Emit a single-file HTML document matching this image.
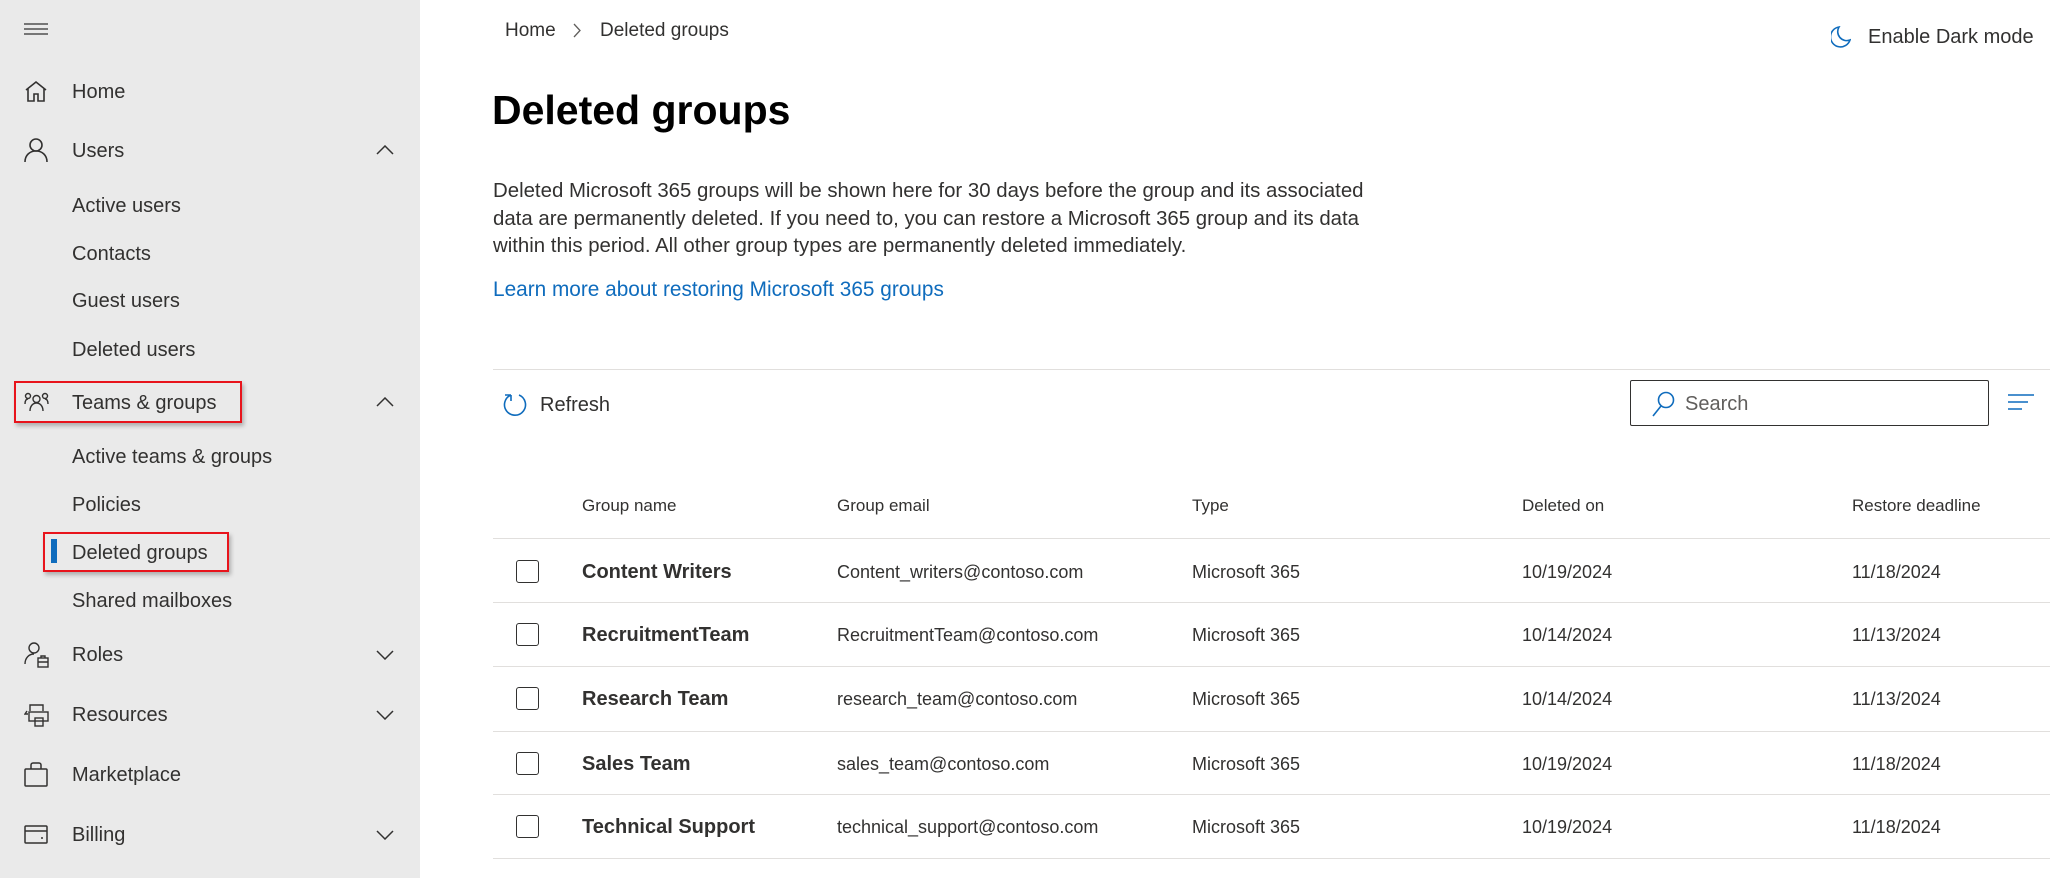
<!DOCTYPE html>
<html><head><meta charset="utf-8"><style>
*{margin:0;padding:0;box-sizing:border-box}
body{width:2061px;height:878px;overflow:hidden;background:#fff;font-family:"Liberation Sans",sans-serif;color:#323130;position:relative}
.side{position:absolute;left:0;top:0;width:420px;height:878px;background:#eaeaea}
.t{position:absolute;white-space:nowrap;line-height:1}
.side .t{font-size:20px;color:#323130}
.ic{position:absolute}
.box{position:absolute;border:2px solid #e8141c;box-shadow:2px 3px 4px rgba(0,0,0,.25)}
.main .t{color:#323130}
.hd{font-size:17px;color:#484644}
.cell{font-size:18px;color:#323130}
.nm{font-size:20px;font-weight:bold;color:#323130}
.ln{position:absolute;left:493px;width:1557px;height:1px;background:#e1dfdd}
.cb{position:absolute;left:516px;width:23px;height:23px;border:1.5px solid #323130;border-radius:3px;background:#fff}
</style></head><body>
<div class="side">
<svg class="ic" style="left:24px;top:23px" width="24" height="12"><path d="M0 1h24M0 6h24M0 11h24" stroke="#323130" stroke-width="1.3"/></svg>
<svg class="ic" style="left:24px;top:80px" width="24" height="22" fill="none" stroke="#323130" stroke-width="1.6"><path d="M2 10L12 2l10 8M4 8v13h6v-7h4v7h6V8"/></svg>
<div class="t" style="left:72px;top:82px">Home</div>
<svg class="ic" style="left:24px;top:138px" width="24" height="25" fill="none" stroke="#323130" stroke-width="1.6"><circle cx="12" cy="7" r="6"/><path d="M1 24c0-7 5-11 11-11s11 4 11 11"/></svg>
<div class="t" style="left:72px;top:141px">Users</div>
<svg class="ic" style="left:376px;top:145px" width="18" height="10" fill="none" stroke="#323130" stroke-width="1.5"><path d="M1 9l8-8 8 8"/></svg>
<div class="t" style="left:72px;top:196px">Active users</div>
<div class="t" style="left:72px;top:244px">Contacts</div>
<div class="t" style="left:72px;top:291px">Guest users</div>
<div class="t" style="left:72px;top:340px">Deleted users</div>
<div class="box" style="left:14px;top:381px;width:228px;height:42px"></div>
<svg class="ic" style="left:24px;top:392px" width="25" height="20" fill="none" stroke="#323130" stroke-width="1.4"><circle cx="4" cy="4" r="2.5"/><circle cx="21" cy="4" r="2.5"/><circle cx="12.5" cy="7" r="3.5"/><path d="M1 12c0-3 1-5 3-5M24 12c0-3-1-5-3-5M6 19c0-5 3-8 6.5-8s6.5 3 6.5 8"/></svg>
<div class="t" style="left:72px;top:393px">Teams &amp; groups</div>
<svg class="ic" style="left:376px;top:397px" width="18" height="10" fill="none" stroke="#323130" stroke-width="1.5"><path d="M1 9l8-8 8 8"/></svg>
<div class="t" style="left:72px;top:447px">Active teams &amp; groups</div>
<div class="t" style="left:72px;top:495px">Policies</div>
<div class="box" style="left:43px;top:532px;width:186px;height:40px"></div>
<div style="position:absolute;left:51px;top:539px;width:6px;height:24px;background:#0f6cbd"></div>
<div class="t" style="left:72px;top:543px">Deleted groups</div>
<div class="t" style="left:72px;top:591px">Shared mailboxes</div>
<svg class="ic" style="left:24px;top:642px" width="25" height="26" fill="none" stroke="#323130" stroke-width="1.4"><circle cx="10" cy="6" r="5"/><path d="M1 22c0-6 4-10 9-10"/><rect x="14" y="16" width="10" height="9"/><path d="M17 16v-2h4v2M14 20h10"/></svg>
<div class="t" style="left:72px;top:645px">Roles</div>
<svg class="ic" style="left:376px;top:650px" width="18" height="10" fill="none" stroke="#323130" stroke-width="1.5"><path d="M1 1l8 8 8-8"/></svg>
<svg class="ic" style="left:24px;top:703px" width="25" height="25" fill="none" stroke="#323130" stroke-width="1.4"><path d="M6 8V2h13v6M3 8l-2 3h3"/><rect x="5" y="9" width="19" height="9"/><rect x="11" y="15" width="8" height="8"/></svg>
<div class="t" style="left:72px;top:705px">Resources</div>
<svg class="ic" style="left:376px;top:710px" width="18" height="10" fill="none" stroke="#323130" stroke-width="1.5"><path d="M1 1l8 8 8-8"/></svg>
<svg class="ic" style="left:24px;top:762px" width="24" height="25" fill="none" stroke="#323130" stroke-width="1.5"><rect x="1" y="7" width="22" height="17" rx="1"/><path d="M7 7V3a2 2 0 012-2h6a2 2 0 012 2v4"/></svg>
<div class="t" style="left:72px;top:765px">Marketplace</div>
<svg class="ic" style="left:24px;top:825px" width="24" height="20" fill="none" stroke="#323130" stroke-width="1.5"><rect x="1" y="1" width="22" height="17" rx="1"/><path d="M1 6h22M17 13h2"/></svg>
<div class="t" style="left:72px;top:825px">Billing</div>
<svg class="ic" style="left:376px;top:830px" width="18" height="10" fill="none" stroke="#323130" stroke-width="1.5"><path d="M1 1l8 8 8-8"/></svg>
</div>

<div class="main">
<div class="t" style="left:505px;top:21px;font-size:19px">Home</div>
<svg class="ic" style="left:573px;top:23px" width="9" height="15" fill="none" stroke="#605e5c" stroke-width="1.3"><path d="M1 1l6 6.5L1 14"/></svg>
<div class="t" style="left:600px;top:21px;font-size:19px">Deleted groups</div>
<svg class="ic" style="left:1831px;top:26px" width="20" height="22" fill="none" stroke="#0f6cbd" stroke-width="1.6"><path d="M8 1a10 10 0 1011 13A9 9 0 018 1z"/></svg>
<div class="t" style="left:1868px;top:27px;font-size:20px">Enable Dark mode</div>
<div class="t" style="left:492px;top:90px;font-size:41px;font-weight:bold;color:#000">Deleted groups</div>
<div style="position:absolute;left:493px;top:178px;width:1000px;font-size:20.4px;line-height:27.6px;color:#323130;white-space:nowrap">Deleted Microsoft 365 groups will be shown here for 30 days before the group and its associated<br>data are permanently deleted. If you need to, you can restore a Microsoft 365 group and its data<br>within this period. All other group types are permanently deleted immediately.</div>
<div class="t" style="left:493px;top:280px;font-size:20.8px;color:#0f6cbd">Learn more about restoring Microsoft 365 groups</div>
<div class="ln" style="top:369px"></div>
<svg class="ic" style="left:503px;top:392px" width="25" height="26" fill="none" stroke="#0f6cbd" stroke-width="1.6"><path d="M8 3a10.5 10.5 0 108 0M8 3v6M8 3H2"/></svg>
<div class="t" style="left:540px;top:395px;font-size:20px">Refresh</div>
<div style="position:absolute;left:1630px;top:380px;width:359px;height:46px;border:1.5px solid #323130;border-radius:2px"></div>
<svg class="ic" style="left:1651px;top:391px" width="24" height="26" fill="none" stroke="#0f6cbd" stroke-width="1.6"><circle cx="15" cy="9" r="7.5"/><path d="M10 15L2 25"/></svg>
<div class="t" style="left:1685px;top:394px;font-size:20px;color:#605e5c">Search</div>
<svg class="ic" style="left:2008px;top:393px" width="26" height="20" stroke="#0f6cbd" stroke-width="1.6"><path d="M0 2h26M0 9h20M0 16h14"/></svg>

<div class="t hd" style="left:582px;top:497px">Group name</div>
<div class="t hd" style="left:837px;top:497px">Group email</div>
<div class="t hd" style="left:1192px;top:497px">Type</div>
<div class="t hd" style="left:1522px;top:497px">Deleted on</div>
<div class="t hd" style="left:1852px;top:497px">Restore deadline</div>
<div class="ln" style="top:538px"></div>

<div class="cb" style="top:560px"></div>
<div class="t nm" style="left:582px;top:562px">Content Writers</div>
<div class="t cell" style="left:837px;top:563px">Content_writers@contoso.com</div>
<div class="t cell" style="left:1192px;top:563px">Microsoft 365</div>
<div class="t cell" style="left:1522px;top:563px">10/19/2024</div>
<div class="t cell" style="left:1852px;top:563px">11/18/2024</div>
<div class="ln" style="top:602px"></div>

<div class="cb" style="top:623px"></div>
<div class="t nm" style="left:582px;top:625px">RecruitmentTeam</div>
<div class="t cell" style="left:837px;top:626px">RecruitmentTeam@contoso.com</div>
<div class="t cell" style="left:1192px;top:626px">Microsoft 365</div>
<div class="t cell" style="left:1522px;top:626px">10/14/2024</div>
<div class="t cell" style="left:1852px;top:626px">11/13/2024</div>
<div class="ln" style="top:666px"></div>

<div class="cb" style="top:687px"></div>
<div class="t nm" style="left:582px;top:689px">Research Team</div>
<div class="t cell" style="left:837px;top:690px">research_team@contoso.com</div>
<div class="t cell" style="left:1192px;top:690px">Microsoft 365</div>
<div class="t cell" style="left:1522px;top:690px">10/14/2024</div>
<div class="t cell" style="left:1852px;top:690px">11/13/2024</div>
<div class="ln" style="top:731px"></div>

<div class="cb" style="top:752px"></div>
<div class="t nm" style="left:582px;top:754px">Sales Team</div>
<div class="t cell" style="left:837px;top:755px">sales_team@contoso.com</div>
<div class="t cell" style="left:1192px;top:755px">Microsoft 365</div>
<div class="t cell" style="left:1522px;top:755px">10/19/2024</div>
<div class="t cell" style="left:1852px;top:755px">11/18/2024</div>
<div class="ln" style="top:794px"></div>

<div class="cb" style="top:815px"></div>
<div class="t nm" style="left:582px;top:817px">Technical Support</div>
<div class="t cell" style="left:837px;top:818px">technical_support@contoso.com</div>
<div class="t cell" style="left:1192px;top:818px">Microsoft 365</div>
<div class="t cell" style="left:1522px;top:818px">10/19/2024</div>
<div class="t cell" style="left:1852px;top:818px">11/18/2024</div>
<div class="ln" style="top:858px"></div>
</div>
</body></html>
